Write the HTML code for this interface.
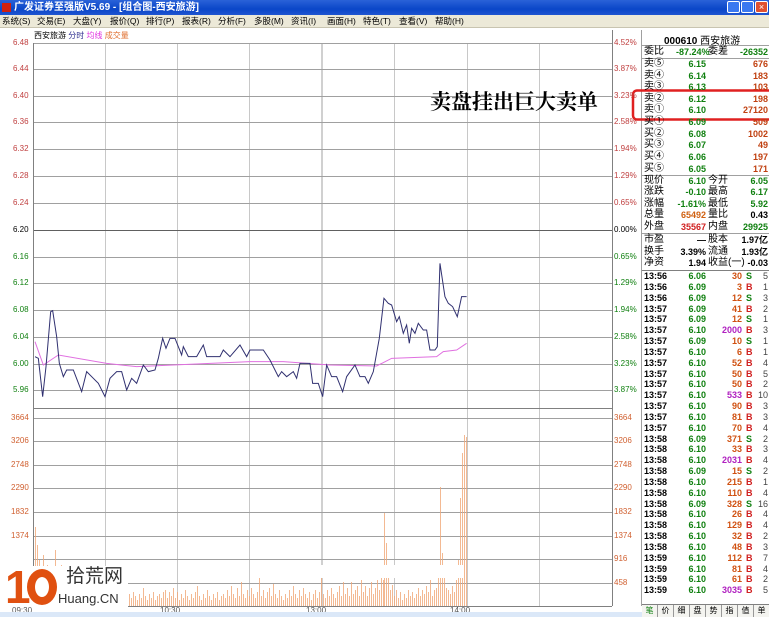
<!DOCTYPE html>
<html><head><meta charset="utf-8"><style>
*{margin:0;padding:0;box-sizing:border-box}
body{width:769px;height:617px;overflow:hidden;background:#fff;font-family:"Liberation Sans","Noto Sans CJK SC",sans-serif;position:relative}
.t{position:absolute;white-space:nowrap}
#title{position:absolute;left:0;top:0;width:769px;height:15px;background:linear-gradient(#2a62d8,#0a46c8 60%,#1f55d0);color:#fff;font-size:10px;font-weight:bold;line-height:15px;padding-left:14px}
#menu{position:absolute;left:0;top:15px;width:769px;height:13px;background:#ece9d8;border-bottom:1px solid #c8c4b0;font-size:8.5px;line-height:13px}
.ax{font-size:8px;color:#c04040}
.rp{position:absolute;left:642px;width:127px;font-size:9px;font-weight:bold}
.rp div{position:absolute;left:0;width:127px;height:12px;line-height:12px}
.rp span{position:absolute}
.l{left:2px;color:#000;font-weight:normal;font-size:10px}
.p{right:63px;color:#108010}
.v{right:1px;color:#c04010}
.tk{position:absolute;left:642px;width:127px;font-size:9px;font-weight:bold}
.tk div{position:absolute;left:0;width:127px;height:11px;line-height:11px}
.tk span{position:absolute}
.tm{left:2px;color:#000}
.tp{right:63px;color:#108010}
.tv{right:27px;color:#d05010}
.tb{left:104px}
.tc{right:1px;color:#444;font-weight:normal}
</style></head><body>
<div id="title"><span style="position:absolute;left:2px;top:3px;width:9px;height:9px;background:#d02010"></span>广发证券至强版V5.69 - [组合图-西安旅游]</div>
<div style="position:absolute;left:727px;top:1px;width:13px;height:12px;background:#3a78f0;border:1px solid #fff;border-radius:2px"></div>
<div style="position:absolute;left:741px;top:1px;width:13px;height:12px;background:#3a78f0;border:1px solid #fff;border-radius:2px"></div>
<div style="position:absolute;left:755px;top:1px;width:13px;height:12px;background:#e05030;border:1px solid #fff;border-radius:2px;color:#fff;font-size:9px;line-height:10px;text-align:center">×</div>
<div id="menu">
<span class="t" style="left:2px">系统(S)</span><span class="t" style="left:37px">交易(E)</span><span class="t" style="left:73px">大盘(Y)</span><span class="t" style="left:110px">报价(Q)</span><span class="t" style="left:146px">排行(P)</span><span class="t" style="left:182px">报表(R)</span><span class="t" style="left:218px">分析(F)</span><span class="t" style="left:254px">多股(M)</span><span class="t" style="left:291px">资讯(I)</span><span class="t" style="left:327px">画面(H)</span><span class="t" style="left:363px">特色(T)</span><span class="t" style="left:399px">查看(V)</span><span class="t" style="left:435px">帮助(H)</span>
</div>
<div class="t" style="left:34px;top:30px;font-size:8px">西安旅游 <span style="color:#303090">分时</span> <span style="color:#e030e0">均线</span> <span style="color:#e07030">成交量</span></div>

<svg style="position:absolute;left:0;top:0" width="769" height="617">
<g stroke="#c8c8c8" stroke-width="1">
<line x1="105.5" y1="43" x2="105.5" y2="606"/><line x1="177.5" y1="43" x2="177.5" y2="606"/><line x1="249.5" y1="43" x2="249.5" y2="606"/><line x1="394.5" y1="43" x2="394.5" y2="606"/><line x1="467.5" y1="43" x2="467.5" y2="606"/><line x1="539.5" y1="43" x2="539.5" y2="606"/>
</g>
<line x1="322" y1="43" x2="322" y2="606" stroke="#a0a0a0"/>
<g stroke="#a0a0a0" stroke-width="1">
<line x1="33" y1="43.5" x2="612" y2="43.5"/><line x1="33" y1="69.5" x2="612" y2="69.5"/><line x1="33" y1="96.5" x2="612" y2="96.5"/><line x1="33" y1="122.5" x2="612" y2="122.5"/><line x1="33" y1="149.5" x2="612" y2="149.5"/><line x1="33" y1="176.5" x2="612" y2="176.5"/><line x1="33" y1="203.5" x2="612" y2="203.5"/>
<line x1="33" y1="257.5" x2="612" y2="257.5"/><line x1="33" y1="283.5" x2="612" y2="283.5"/><line x1="33" y1="310.5" x2="612" y2="310.5"/><line x1="33" y1="337.5" x2="612" y2="337.5"/><line x1="33" y1="364.5" x2="612" y2="364.5"/><line x1="33" y1="390.5" x2="612" y2="390.5"/>
<line x1="33" y1="418.5" x2="612" y2="418.5"/><line x1="33" y1="441.5" x2="612" y2="441.5"/><line x1="33" y1="465.5" x2="612" y2="465.5"/><line x1="33" y1="488.5" x2="612" y2="488.5"/><line x1="33" y1="512.5" x2="612" y2="512.5"/><line x1="33" y1="536.5" x2="612" y2="536.5"/><line x1="33" y1="559.5" x2="612" y2="559.5"/><line x1="33" y1="583.5" x2="612" y2="583.5"/>
</g>
<line x1="33" y1="230.5" x2="612" y2="230.5" stroke="#606060"/>
<line x1="33" y1="408.5" x2="612" y2="408.5" stroke="#808080"/>
<line x1="33" y1="606.5" x2="612" y2="606.5" stroke="#808080"/>
<line x1="33.5" y1="43" x2="33.5" y2="606" stroke="#808080"/>
<line x1="612.5" y1="30" x2="612.5" y2="606" stroke="#808080"/>
<line x1="641.5" y1="30" x2="641.5" y2="606" stroke="#a0a0a0"/>
<g transform="translate(30,250) scale(0.3333)" fill="none">
<polyline stroke="#e070e0" stroke-width="3" points="15,275 40,345 85,315 230,340 320,350 430,345 660,335 760,335 900,345 1040,348 1085,325 1220,320 1240,305 1280,300 1310,280"/>
<polyline stroke="#303070" stroke-width="3" points="15,320 25,325 38,440 48,350 62,185 68,182 80,260 88,340 100,380 110,360 130,360 155,425 170,365 190,385 205,400 225,440 240,385 260,365 275,365 290,420 305,385 320,400 340,345 355,365 375,360 385,325 398,265 408,295 420,265 435,265 455,315 460,290 475,320 500,320 520,285 530,320 570,320 580,300 600,320 630,285 650,320 660,300 700,300 720,330 745,380 755,365 770,380 790,365 800,385 810,340 840,340 848,400 865,400 878,440 890,345 905,380 920,380 938,425 950,380 975,345 990,380 1005,380 1015,400 1030,365 1048,265 1062,145 1075,160 1085,165 1100,215 1108,200 1120,250 1130,225 1138,280 1145,235 1155,250 1165,220 1180,240 1190,240 1200,300 1215,300 1222,290 1230,40 1245,140 1255,160 1268,170 1282,200 1295,140 1310,140"/>
</g>
<path stroke="#f0a878" stroke-width="0.8" fill="none" d="M35.5 606V527M37.5 606V545M39.5 606V560M41.5 606V575M43.5 606V555M45.5 606V590M47.5 606V565M49.5 606V585M51.5 606V580M53.5 606V578M55.5 606V550M57.5 606V570M59.5 606V590M61.5 606V565M63.5 606V595M65.5 606V580M67.5 606V598M69.5 606V585M71.5 606V590M73.5 606V595M75.5 606V585M77.5 606V596M79.5 606V590M81.5 606V598M83.5 606V592M85.5 606V580M87.5 606V596M89.5 606V590M91.5 606V598M93.5 606V594M95.5 606V586M97.5 606V598M99.5 606V590M101.5 606V596M103.5 606V588M105.5 606V596M107.5 606V600M109.5 606V594M111.5 606V598M113.5 606V592M115.5 606V600M117.5 606V596M119.5 606V594M121.5 606V598M123.5 606V590M125.5 606V596M127.5 606V600M129.5 606V594M131.5 606V598M133.5 606V592M135.5 606V596M137.5 606V600M139.5 606V594M141.5 606V598M143.5 606V588M145.5 606V596M147.5 606V600M149.5 606V594M151.5 606V598M153.5 606V592M155.5 606V600M157.5 606V596M159.5 606V594M161.5 606V598M163.5 606V592M165.5 606V590M167.5 606V598M169.5 606V592M171.5 606V596M173.5 606V588M175.5 606V598M177.5 606V592M179.5 606V600M181.5 606V594M183.5 606V598M185.5 606V590M187.5 606V596M189.5 606V600M191.5 606V594M193.5 606V598M195.5 606V592M197.5 606V586M199.5 606V596M201.5 606V600M203.5 606V594M205.5 606V598M207.5 606V590M209.5 606V596M211.5 606V600M213.5 606V594M215.5 606V598M217.5 606V592M219.5 606V600M221.5 606V596M223.5 606V594M225.5 606V598M227.5 606V590M229.5 606V596M231.5 606V586M233.5 606V594M235.5 606V598M237.5 606V588M239.5 606V596M241.5 606V582M243.5 606V594M245.5 606V598M247.5 606V590M249.5 606V596M251.5 606V588M253.5 606V594M255.5 606V598M257.5 606V592M259.5 606V578M261.5 606V596M263.5 606V590M265.5 606V598M267.5 606V592M269.5 606V588M271.5 606V596M273.5 606V584M275.5 606V594M277.5 606V598M279.5 606V590M281.5 606V596M283.5 606V600M285.5 606V594M287.5 606V598M289.5 606V590M291.5 606V596M293.5 606V586M295.5 606V594M297.5 606V598M299.5 606V590M301.5 606V596M303.5 606V588M305.5 606V594M307.5 606V598M309.5 606V592M311.5 606V600M313.5 606V594M315.5 606V590M317.5 606V598M319.5 606V592M321.5 606V578M323.5 606V594M325.5 606V598M327.5 606V590M329.5 606V596M331.5 606V588M333.5 606V594M335.5 606V598M337.5 606V592M339.5 606V586M341.5 606V596M343.5 606V582M345.5 606V594M347.5 606V588M349.5 606V596M351.5 606V582M353.5 606V594M355.5 606V590M357.5 606V586M359.5 606V596M361.5 606V580M363.5 606V592M365.5 606V586M367.5 606V596M369.5 606V588M371.5 606V582M373.5 606V594M375.5 606V588M377.5 606V580M379.5 606V590M381.5 606V565M383.5 606V580M384.5 606V513M386.5 606V543M388.5 606V575M390.5 606V590M392.5 606V585M394.5 606V596M396.5 606V590M398.5 606V598M400.5 606V592M402.5 606V600M404.5 606V594M406.5 606V598M408.5 606V590M410.5 606V596M412.5 606V592M414.5 606V598M416.5 606V594M418.5 606V588M420.5 606V596M422.5 606V590M424.5 606V594M426.5 606V586M428.5 606V592M430.5 606V580M432.5 606V596M434.5 606V590M436.5 606V588M438.5 606V575M440.5 606V487M442.5 606V553M444.5 606V575M446.5 606V588M448.5 606V590M450.5 606V594M452.5 606V586M454.5 606V592M456.5 606V580M458.5 606V560M460.5 606V498M462.5 606V453M464.5 606V435M466.5 606V437"/>
<rect x="258" y="565" width="205" height="13" fill="#fff"/>
<rect x="0" y="566" width="128" height="46" fill="#fff"/>
<rect x="633" y="90.5" width="140" height="29" rx="4" fill="none" stroke="#e02020" stroke-width="2.5"/>
<line x1="642" y1="45.5" x2="769" y2="45.5" stroke="#a0a0a0"/>
<line x1="642" y1="58.5" x2="769" y2="58.5" stroke="#a0a0a0"/>
<line x1="642" y1="175.5" x2="769" y2="175.5" stroke="#a0a0a0"/>
<line x1="642" y1="233.5" x2="769" y2="233.5" stroke="#a0a0a0"/>
<line x1="642" y1="270.5" x2="769" y2="270.5" stroke="#808080"/>
<line x1="642" y1="604.5" x2="769" y2="604.5" stroke="#808080"/>
</svg>

<div class="ax">
<span class="t" style="left:13px;top:38px">6.48</span><span class="t" style="left:13px;top:64px">6.44</span><span class="t" style="left:13px;top:91px">6.40</span><span class="t" style="left:13px;top:117px">6.36</span><span class="t" style="left:13px;top:144px">6.32</span><span class="t" style="left:13px;top:171px">6.28</span><span class="t" style="left:13px;top:198px">6.24</span><span class="t" style="left:13px;top:225px;color:#000">6.20</span>
<span class="t" style="left:13px;top:252px;color:#108010">6.16</span><span class="t" style="left:13px;top:278px;color:#108010">6.12</span><span class="t" style="left:13px;top:305px;color:#108010">6.08</span><span class="t" style="left:13px;top:332px;color:#108010">6.04</span><span class="t" style="left:13px;top:359px;color:#108010">6.00</span><span class="t" style="left:13px;top:385px;color:#108010">5.96</span>
<span class="t" style="left:11px;top:413px;color:#d06030">3664</span><span class="t" style="left:11px;top:436px;color:#d06030">3206</span><span class="t" style="left:11px;top:460px;color:#d06030">2748</span><span class="t" style="left:11px;top:483px;color:#d06030">2290</span><span class="t" style="left:11px;top:507px;color:#d06030">1832</span><span class="t" style="left:11px;top:531px;color:#d06030">1374</span>
<span class="t" style="left:614px;top:38px">4.52%</span><span class="t" style="left:614px;top:64px">3.87%</span><span class="t" style="left:614px;top:91px">3.23%</span><span class="t" style="left:614px;top:117px">2.58%</span><span class="t" style="left:614px;top:144px">1.94%</span><span class="t" style="left:614px;top:171px">1.29%</span><span class="t" style="left:614px;top:198px">0.65%</span><span class="t" style="left:614px;top:225px;color:#000">0.00%</span>
<span class="t" style="left:614px;top:252px;color:#108010">0.65%</span><span class="t" style="left:614px;top:278px;color:#108010">1.29%</span><span class="t" style="left:614px;top:305px;color:#108010">1.94%</span><span class="t" style="left:614px;top:332px;color:#108010">2.58%</span><span class="t" style="left:614px;top:359px;color:#108010">3.23%</span><span class="t" style="left:614px;top:385px;color:#108010">3.87%</span>
<span class="t" style="left:614px;top:413px;color:#d06030">3664</span><span class="t" style="left:614px;top:436px;color:#d06030">3206</span><span class="t" style="left:614px;top:460px;color:#d06030">2748</span><span class="t" style="left:614px;top:483px;color:#d06030">2290</span><span class="t" style="left:614px;top:507px;color:#d06030">1832</span><span class="t" style="left:614px;top:531px;color:#d06030">1374</span><span class="t" style="left:614px;top:554px;color:#d06030">916</span><span class="t" style="left:614px;top:578px;color:#d06030">458</span>
<span class="t" style="left:160px;top:606px;color:#555">10:30</span><span class="t" style="left:306px;top:606px;color:#555">13:00</span><span class="t" style="left:450px;top:606px;color:#555">14:00</span><span class="t" style="left:12px;top:606px;color:#555">09:30</span>
</div>

<div class="t" style="left:5px;top:562px;font-size:46px;font-weight:bold;color:#e05010;letter-spacing:-4px;line-height:50px">1<span style="display:inline-block;width:30px;height:36px;border:8px solid #e05010;border-radius:50%;vertical-align:-2px"></span></div>
<div class="t" style="left:66px;top:566px;font-size:19px;color:#333;line-height:22px">拾荒网</div>
<div class="t" style="left:58px;top:591px;font-size:13px;color:#333;line-height:15px">Huang.CN</div>

<div class="t" style="left:430px;top:86px;font-size:21px;font-family:'Liberation Serif','Noto Serif CJK SC',serif;font-weight:bold;color:#000">卖盘挂出巨大卖单</div>

<div class="t" style="left:664px;top:32px;font-size:10px;font-weight:bold">000610 <span style="font-weight:normal">西安旅游</span></div>
<div class="rp" style="top:46px">
<div style="top:0"><span class="l">委比</span><span style="left:34px;color:#108010">-87.24%</span><span style="left:66px;font-weight:normal;font-size:10px">委差</span><span class="v" style="color:#108010">-26352</span></div>
<div style="top:12px"><span class="l">卖⑤</span><span class="p">6.15</span><span class="v">676</span></div>
<div style="top:24px"><span class="l">卖④</span><span class="p">6.14</span><span class="v">183</span></div>
<div style="top:35px"><span class="l">卖③</span><span class="p">6.13</span><span class="v">103</span></div>
<div style="top:47px"><span class="l">卖②</span><span class="p">6.12</span><span class="v">198</span></div>
<div style="top:58px"><span class="l">卖①</span><span class="p">6.10</span><span class="v">27120</span></div>
<div style="top:70px"><span class="l">买①</span><span class="p">6.09</span><span class="v">509</span></div>
<div style="top:82px"><span class="l">买②</span><span class="p">6.08</span><span class="v">1002</span></div>
<div style="top:93px"><span class="l">买③</span><span class="p">6.07</span><span class="v">49</span></div>
<div style="top:105px"><span class="l">买④</span><span class="p">6.06</span><span class="v">197</span></div>
<div style="top:117px"><span class="l">买⑤</span><span class="p">6.05</span><span class="v">171</span></div>
<div style="top:129px"><span class="l">现价</span><span class="p">6.10</span><span style="left:66px;font-weight:normal;font-size:10px">今开</span><span class="v" style="color:#108010">6.05</span></div>
<div style="top:140px"><span class="l">涨跌</span><span class="p">-0.10</span><span style="left:66px;font-weight:normal;font-size:10px">最高</span><span class="v" style="color:#108010">6.17</span></div>
<div style="top:152px"><span class="l">涨幅</span><span class="p">-1.61%</span><span style="left:66px;font-weight:normal;font-size:10px">最低</span><span class="v" style="color:#108010">5.92</span></div>
<div style="top:163px"><span class="l">总量</span><span class="p" style="color:#d06010">65492</span><span style="left:66px;font-weight:normal;font-size:10px">量比</span><span class="v" style="color:#000">0.43</span></div>
<div style="top:175px"><span class="l">外盘</span><span class="p" style="color:#d02020">35567</span><span style="left:66px;font-weight:normal;font-size:10px">内盘</span><span class="v" style="color:#108010">29925</span></div>
<div style="top:188px"><span class="l">市盈</span><span class="p" style="color:#000">—</span><span style="left:66px;font-weight:normal;font-size:10px">股本</span><span class="v" style="color:#000">1.97亿</span></div>
<div style="top:200px"><span class="l">换手</span><span class="p" style="color:#000">3.39%</span><span style="left:66px;font-weight:normal;font-size:10px">流通</span><span class="v" style="color:#000">1.93亿</span></div>
<div style="top:211px"><span class="l">净资</span><span class="p" style="color:#000">1.94</span><span style="left:66px;font-weight:normal;font-size:10px">收益(一)</span><span class="v" style="color:#000">-0.03</span></div>
</div>

<div class="tk" style="top:271px">
<div style="top:0px"><span class="tm">13:56</span><span class="tp">6.06</span><span class="tv">30</span><span class="tb" style="color:#108010">S</span><span class="tc">5</span></div>
<div style="top:10.8px"><span class="tm">13:56</span><span class="tp">6.09</span><span class="tv">3</span><span class="tb" style="color:#d02020">B</span><span class="tc">1</span></div>
<div style="top:21.7px"><span class="tm">13:56</span><span class="tp">6.09</span><span class="tv">12</span><span class="tb" style="color:#108010">S</span><span class="tc">3</span></div>
<div style="top:32.5px"><span class="tm">13:57</span><span class="tp">6.09</span><span class="tv">41</span><span class="tb" style="color:#d02020">B</span><span class="tc">2</span></div>
<div style="top:43.3px"><span class="tm">13:57</span><span class="tp">6.09</span><span class="tv">12</span><span class="tb" style="color:#108010">S</span><span class="tc">1</span></div>
<div style="top:54.2px"><span class="tm">13:57</span><span class="tp">6.10</span><span class="tv" style="color:#b020c0">2000</span><span class="tb" style="color:#d02020">B</span><span class="tc">3</span></div>
<div style="top:65px"><span class="tm">13:57</span><span class="tp">6.09</span><span class="tv">10</span><span class="tb" style="color:#108010">S</span><span class="tc">1</span></div>
<div style="top:75.8px"><span class="tm">13:57</span><span class="tp">6.10</span><span class="tv">6</span><span class="tb" style="color:#d02020">B</span><span class="tc">1</span></div>
<div style="top:86.6px"><span class="tm">13:57</span><span class="tp">6.10</span><span class="tv">52</span><span class="tb" style="color:#d02020">B</span><span class="tc">4</span></div>
<div style="top:97.5px"><span class="tm">13:57</span><span class="tp">6.10</span><span class="tv">50</span><span class="tb" style="color:#d02020">B</span><span class="tc">5</span></div>
<div style="top:108.3px"><span class="tm">13:57</span><span class="tp">6.10</span><span class="tv">50</span><span class="tb" style="color:#d02020">B</span><span class="tc">2</span></div>
<div style="top:119.1px"><span class="tm">13:57</span><span class="tp">6.10</span><span class="tv" style="color:#b020c0">533</span><span class="tb" style="color:#d02020">B</span><span class="tc">10</span></div>
<div style="top:130px"><span class="tm">13:57</span><span class="tp">6.10</span><span class="tv">90</span><span class="tb" style="color:#d02020">B</span><span class="tc">3</span></div>
<div style="top:140.8px"><span class="tm">13:57</span><span class="tp">6.10</span><span class="tv">81</span><span class="tb" style="color:#d02020">B</span><span class="tc">3</span></div>
<div style="top:151.6px"><span class="tm">13:57</span><span class="tp">6.10</span><span class="tv">70</span><span class="tb" style="color:#d02020">B</span><span class="tc">4</span></div>
<div style="top:162.5px"><span class="tm">13:58</span><span class="tp">6.09</span><span class="tv">371</span><span class="tb" style="color:#108010">S</span><span class="tc">2</span></div>
<div style="top:173.3px"><span class="tm">13:58</span><span class="tp">6.10</span><span class="tv">33</span><span class="tb" style="color:#d02020">B</span><span class="tc">3</span></div>
<div style="top:184.1px"><span class="tm">13:58</span><span class="tp">6.10</span><span class="tv" style="color:#b020c0">2031</span><span class="tb" style="color:#d02020">B</span><span class="tc">4</span></div>
<div style="top:195px"><span class="tm">13:58</span><span class="tp">6.09</span><span class="tv">15</span><span class="tb" style="color:#108010">S</span><span class="tc">2</span></div>
<div style="top:205.8px"><span class="tm">13:58</span><span class="tp">6.10</span><span class="tv">215</span><span class="tb" style="color:#d02020">B</span><span class="tc">1</span></div>
<div style="top:216.6px"><span class="tm">13:58</span><span class="tp">6.10</span><span class="tv">110</span><span class="tb" style="color:#d02020">B</span><span class="tc">4</span></div>
<div style="top:227.5px"><span class="tm">13:58</span><span class="tp">6.09</span><span class="tv">328</span><span class="tb" style="color:#108010">S</span><span class="tc">16</span></div>
<div style="top:238.3px"><span class="tm">13:58</span><span class="tp">6.10</span><span class="tv">26</span><span class="tb" style="color:#d02020">B</span><span class="tc">4</span></div>
<div style="top:249.1px"><span class="tm">13:58</span><span class="tp">6.10</span><span class="tv">129</span><span class="tb" style="color:#d02020">B</span><span class="tc">4</span></div>
<div style="top:260px"><span class="tm">13:58</span><span class="tp">6.10</span><span class="tv">32</span><span class="tb" style="color:#d02020">B</span><span class="tc">2</span></div>
<div style="top:270.8px"><span class="tm">13:58</span><span class="tp">6.10</span><span class="tv">48</span><span class="tb" style="color:#d02020">B</span><span class="tc">3</span></div>
<div style="top:281.6px"><span class="tm">13:59</span><span class="tp">6.10</span><span class="tv">112</span><span class="tb" style="color:#d02020">B</span><span class="tc">7</span></div>
<div style="top:292.5px"><span class="tm">13:59</span><span class="tp">6.10</span><span class="tv">81</span><span class="tb" style="color:#d02020">B</span><span class="tc">4</span></div>
<div style="top:303.3px"><span class="tm">13:59</span><span class="tp">6.10</span><span class="tv">61</span><span class="tb" style="color:#d02020">B</span><span class="tc">2</span></div>
<div style="top:314.1px"><span class="tm">13:59</span><span class="tp">6.10</span><span class="tv" style="color:#b020c0">3035</span><span class="tb" style="color:#d02020">B</span><span class="tc">5</span></div>
</div>

<div style="position:absolute;left:642px;top:605px;width:127px;height:12px;font-size:8px;line-height:12px;display:flex;background:#f4f4f0">
<span style="flex:1;text-align:center;border-right:1px solid #999;color:#108010">笔</span><span style="flex:1;text-align:center;border-right:1px solid #999">价</span><span style="flex:1;text-align:center;border-right:1px solid #999">细</span><span style="flex:1;text-align:center;border-right:1px solid #999">盘</span><span style="flex:1;text-align:center;border-right:1px solid #999">势</span><span style="flex:1;text-align:center;border-right:1px solid #999">指</span><span style="flex:1;text-align:center;border-right:1px solid #999">值</span><span style="flex:1;text-align:center">单</span>
</div>
<div style="position:absolute;left:0;top:612px;width:642px;height:5px;background:#dbe8f8"></div>
</body></html>
